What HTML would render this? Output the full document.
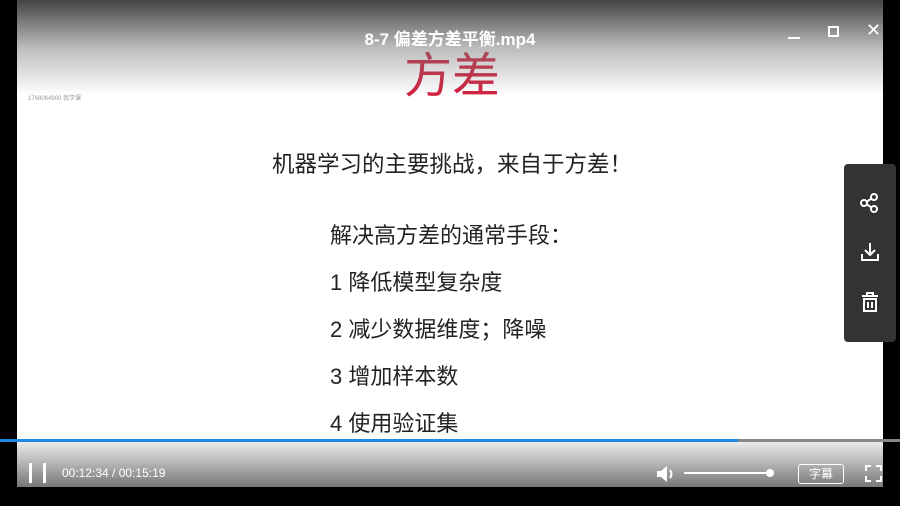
<!DOCTYPE html>
<html><head><meta charset="utf-8"><style>
*{margin:0;padding:0;box-sizing:border-box}
body{width:900px;height:506px;background:#000;position:relative;overflow:hidden;font-family:"Liberation Sans","Noto Sans CJK SC",sans-serif}
.video{position:absolute;left:17px;top:0;width:866px;height:487px;background:#fff}
.topg{position:absolute;left:17px;top:0;width:866px;height:95px;background:linear-gradient(#444,rgba(120,120,120,.5) 50%,rgba(255,255,255,0))}
.botg{position:absolute;left:17px;top:440px;width:866px;height:47px;background:linear-gradient(rgba(230,230,230,.6),#777)}
.t{position:absolute;color:#222;white-space:nowrap}
</style></head><body>
<div class="video"></div>
<div class="t" style="left:404px;top:50px;font-size:48px;color:#d0223f;line-height:54px">方差</div>
<div class="t" style="left:28px;top:93px;font-size:6px;color:#999">1768064900 我学课</div>
<div class="t" style="left:272px;top:151px;font-size:22.5px;line-height:28px">机器学习的主要挑战，来自于方差！</div>
<div class="t" style="left:330px;top:222px;font-size:22px;line-height:28px">解决高方差的通常手段：</div>
<div class="t" style="left:330px;top:269px;font-size:22px;line-height:28px">1 降低模型复杂度</div>
<div class="t" style="left:330px;top:316px;font-size:22px;line-height:28px">2 减少数据维度；降噪</div>
<div class="t" style="left:330px;top:363px;font-size:22px;line-height:28px">3 增加样本数</div>
<div class="t" style="left:330px;top:410px;font-size:22px;line-height:28px">4 使用验证集</div>
<div class="topg"></div>
<div class="botg"></div>
<div class="t" style="left:0;width:900px;text-align:center;top:25px;font-size:17px;font-weight:bold;color:#fff">8-7 偏差方差平衡.mp4</div>
<div style="position:absolute;left:788px;top:37px;width:12px;height:2px;background:#fff"></div>
<div style="position:absolute;left:828px;top:26px;width:11px;height:11px;border:2px solid #fff"></div>
<div class="t" style="left:866px;top:20px;font-size:18px;color:#fff">✕</div>
<div style="position:absolute;left:0;top:439px;width:900px;height:3px;background:#888"></div>
<div style="position:absolute;left:0;top:439px;width:738px;height:3px;background:#1e88e5"></div>
<div style="position:absolute;left:29px;top:463px;width:3px;height:20px;background:#fff"></div>
<div style="position:absolute;left:43px;top:463px;width:3px;height:20px;background:#fff"></div>
<div class="t" style="left:62px;top:466px;font-size:12px;color:#fff">00:12:34 / 00:15:19</div>
<svg style="position:absolute;left:655px;top:464px" width="22" height="20" viewBox="0 0 22 20"><path d="M2 7h4l6-5v16l-6-5H2z" fill="#fff"/><path d="M15 6q3 4 0 8" stroke="#fff" stroke-width="2" fill="none"/></svg>
<div style="position:absolute;left:684px;top:472px;width:86px;height:2px;background:#fff"></div>
<div style="position:absolute;left:766px;top:469px;width:8px;height:8px;border-radius:50%;background:#fff"></div>
<div class="t" style="left:798px;top:464px;width:46px;height:20px;border:1px solid #fff;border-radius:3px;color:#fff;font-size:12px;text-align:center;line-height:18px">字幕</div>
<svg style="position:absolute;left:865px;top:465px" width="17" height="17" viewBox="0 0 17 17" fill="none" stroke="#fff" stroke-width="2"><path d="M1 6V1h5M11 1h5v5M16 11v5h-5M6 16H1v-5"/></svg>
<div style="position:absolute;left:844px;top:164px;width:52px;height:178px;background:#333;border-radius:4px"></div>
<svg style="position:absolute;left:859px;top:192px" width="22" height="22" viewBox="0 0 22 22" fill="none" stroke="#fff" stroke-width="2"><circle cx="15" cy="5" r="3"/><circle cx="5" cy="11" r="3"/><circle cx="15" cy="17" r="3"/><path d="M8 9.5l4.5-3M8 12.5l4.5 3"/></svg>
<svg style="position:absolute;left:859px;top:241px" width="22" height="22" viewBox="0 0 22 22" fill="none" stroke="#fff" stroke-width="2"><path d="M11 2v12M6 9l5 5 5-5M3 13v6h16v-6"/></svg>
<svg style="position:absolute;left:859px;top:291px" width="22" height="22" viewBox="0 0 22 22" fill="none" stroke="#fff" stroke-width="2"><path d="M3 5h16M8 5V2h6v3M5 8h12v12H5zM9 11v6M13 11v6"/></svg>
</body></html>
